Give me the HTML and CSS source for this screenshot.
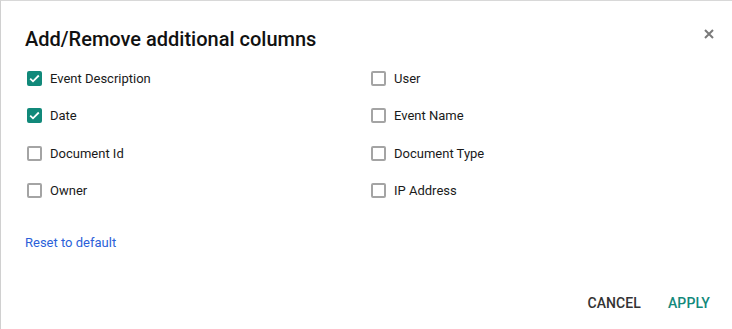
FILE: index.html
```html
<!DOCTYPE html>
<html>
<head>
<meta charset="utf-8">
<link rel="stylesheet" href="styles.css">
</head>
<body>
<div class="dialog">
  <div class="header">
    <h1 class="title">Add/Remove additional columns</h1>
    <button class="close" aria-label="Close">
      <svg width="10" height="10" viewBox="0 0 10 10"><path d="M1 1L9 9M9 1L1 9" stroke="#7a7a7a" stroke-width="2"/></svg>
    </button>
  </div>
  <div class="grid">
    <label class="opt"><span class="box checked"><svg width="11" height="9" viewBox="0 0 11 9"><path d="M1.2 4.6L4 7.3L9.8 1.5" fill="none" stroke="#fff" stroke-width="1.8"/></svg></span>Event Description</label>
    <label class="opt"><span class="box"></span>User</label>
    <label class="opt"><span class="box checked"><svg width="11" height="9" viewBox="0 0 11 9"><path d="M1.2 4.6L4 7.3L9.8 1.5" fill="none" stroke="#fff" stroke-width="1.8"/></svg></span>Date</label>
    <label class="opt"><span class="box"></span>Event Name</label>
    <label class="opt"><span class="box"></span>Document Id</label>
    <label class="opt"><span class="box"></span>Document Type</label>
    <label class="opt"><span class="box"></span>Owner</label>
    <label class="opt"><span class="box"></span>IP Address</label>
  </div>
  <a class="reset" href="#">Reset to default</a>
  <div class="actions">
    <button class="btn cancel">CANCEL</button>
    <button class="btn apply">APPLY</button>
  </div>
</div>
</body>
</html>
```
FILE: styles.css
```css
html, body {
  margin: 0;
  padding: 0;
  background: #fff;
}
body {
  font-family: Roboto, "Liberation Sans", sans-serif;
  color: #212121;
}
.dialog {
  box-sizing: border-box;
  width: 732px;
  height: 329px;
  border-top: 1px solid #d8d8d8;
  border-left: 1px solid #d0d0d0;
  display: flex;
  flex-direction: column;
}
.header {
  display: flex;
  justify-content: space-between;
  align-items: flex-start;
  padding: 26px 18px 0 24px;
}
.title {
  margin: 0;
  font-size: 20px;
  line-height: 24px;
  font-weight: 500;
  color: #111;
}
.close {
  border: 0;
  background: none;
  padding: 0;
  margin-top: 2px;
  width: 10px;
  height: 10px;
  display: flex;
}
.grid {
  display: grid;
  grid-template-columns: 344px 1fr;
  grid-auto-rows: 37.33px;
  padding: 9px 0 0 26px;
}
.opt {
  display: flex;
  align-items: center;
  font-size: 13px;
  color: #1a1a1a;
}
.box {
  box-sizing: border-box;
  width: 15px;
  height: 15px;
  border: 2px solid #a4a4a4;
  border-radius: 2px;
  margin-right: 8px;
  display: flex;
  align-items: center;
  justify-content: center;
}
.box.checked {
  background: #11897a;
  border-color: #11897a;
}
.reset {
  margin: 26px 0 0 24px;
  font-size: 13px;
  color: #2b5fd9;
  text-decoration: none;
  align-self: flex-start;
}
.actions {
  margin-top: auto;
  display: flex;
  justify-content: flex-end;
  gap: 27px;
  padding: 0 22px 18px 0;
}
.btn {
  border: 0;
  background: none;
  padding: 0;
  font-family: Roboto, "Liberation Sans", sans-serif;
  font-size: 14px;
  font-weight: 500;
  letter-spacing: 0.1px;
}
.cancel { color: #333; }
.apply { color: #13897b; }
```
